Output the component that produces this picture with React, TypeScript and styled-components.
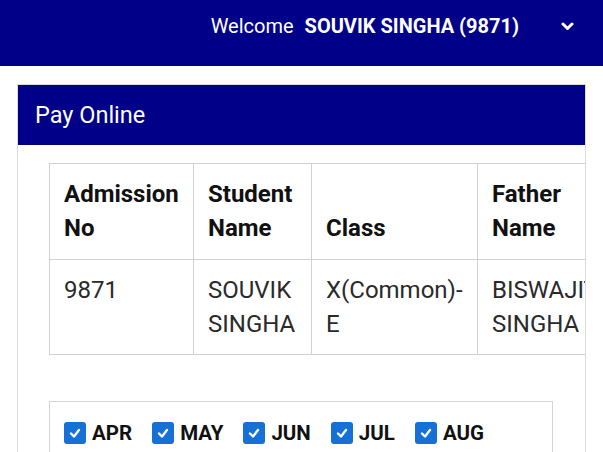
import React from 'react';
import styled, { createGlobalStyle } from 'styled-components';

const GlobalStyle = createGlobalStyle`
  html, body {
    margin: 0;
    padding: 0;
    background: #ffffff;
    font-family: Roboto, 'Liberation Sans', Arial, sans-serif;
    overflow: hidden;
  }
`;

const TopBar = styled.header`
  height: 66px;
  background: #000088;
  color: #ffffff;
  display: flex;
  justify-content: flex-end;
  align-items: flex-start;
  padding: 13px 29px 0 0;
  box-sizing: border-box;
`;

const Welcome = styled.span`
  font-size: 20px;
  line-height: 26px;
`;

const UserName = styled.span`
  font-size: 20px;
  line-height: 26px;
  font-weight: 700;
  margin-left: 11px;
`;

const Chevron = styled.span`
  display: flex;
  margin-left: 42px;
  margin-top: 9px;
`;

const Card = styled.section`
  margin: 18px 17px 0;
  border: 1px solid #dcdcdc;
  overflow: hidden;
`;

const CardHeader = styled.div`
  height: 60px;
  background: #000088;
  color: #ffffff;
  display: flex;
  align-items: center;
  padding-left: 17px;
  font-size: 23.5px;
`;

const CardBody = styled.div`
  padding: 18px 32px 40px 31px;
`;

const Table = styled.table`
  border-collapse: collapse;
  table-layout: fixed;
  width: 700px;
  font-size: 24px;
  line-height: 1.42857;
  color: #222222;
`;

const Th = styled.th<{ w: number }>`
  box-sizing: border-box;
  width: ${p => p.w}px;
  border: 1px solid #d2d2d2;
  padding: 13px 14px;
  text-align: left;
  vertical-align: bottom;
  font-weight: 700;
  color: #111111;
`;

const Td = styled.td`
  border: 1px solid #d2d2d2;
  padding: 13px 14px;
  vertical-align: top;
  color: #2a2a2a;
`;

const MonthBox = styled.div`
  margin-top: 46px;
  border: 1px solid #d4d4d4;
  padding: 19px 14px 30px;
  display: flex;
  gap: 20px;
`;

const Month = styled.label`
  display: flex;
  align-items: center;
  gap: 6px;
  font-size: 20.5px;
  font-weight: 700;
  color: #111111;
`;

const CheckBox = styled.span`
  width: 22px;
  height: 22px;
  border-radius: 3px;
  background: #1670d6;
  display: flex;
  align-items: center;
  justify-content: center;
`;

const columns = [
  { title: 'Admission No', w: 144 },
  { title: 'Student Name', w: 118 },
  { title: 'Class', w: 166 },
  { title: 'Father Name', w: 150 },
  { title: 'Mother Name', w: 122 },
];

const row = ['9871', 'SOUVIK SINGHA', 'X(Common)-E', 'BISWAJIT SINGHA', 'RINA SINGHA'];

const months = ['APR', 'MAY', 'JUN', 'JUL', 'AUG'];

const App: React.FC = () => {
  return (
    <>
      <GlobalStyle />
      <TopBar>
        <Welcome>Welcome</Welcome>
        <UserName>SOUVIK SINGHA (9871)</UserName>
        <Chevron>
          <svg width="13" height="9" viewBox="0 0 13 9">
            <polyline points="2,2 6.5,6.5 11,2" fill="none" stroke="#ffffff" strokeWidth="3" strokeLinecap="round" strokeLinejoin="round" />
          </svg>
        </Chevron>
      </TopBar>
      <Card>
        <CardHeader>Pay Online</CardHeader>
        <CardBody>
          <Table>
            <thead>
              <tr>
                {columns.map(c => (
                  <Th key={c.title} w={c.w}>{c.title}</Th>
                ))}
              </tr>
            </thead>
            <tbody>
              <tr>
                {row.map((v, i) => (
                  <Td key={i}>{v}</Td>
                ))}
              </tr>
            </tbody>
          </Table>
          <MonthBox>
            {months.map(m => (
              <Month key={m}>
                <CheckBox>
                  <svg width="14" height="14" viewBox="0 0 14 14">
                    <polyline points="3,7.5 6,10.5 11,4" fill="none" stroke="#ffffff" strokeWidth="2.4" strokeLinecap="round" strokeLinejoin="round" />
                  </svg>
                </CheckBox>
                {m}
              </Month>
            ))}
          </MonthBox>
        </CardBody>
      </Card>
    </>
  );
};

export default App;
